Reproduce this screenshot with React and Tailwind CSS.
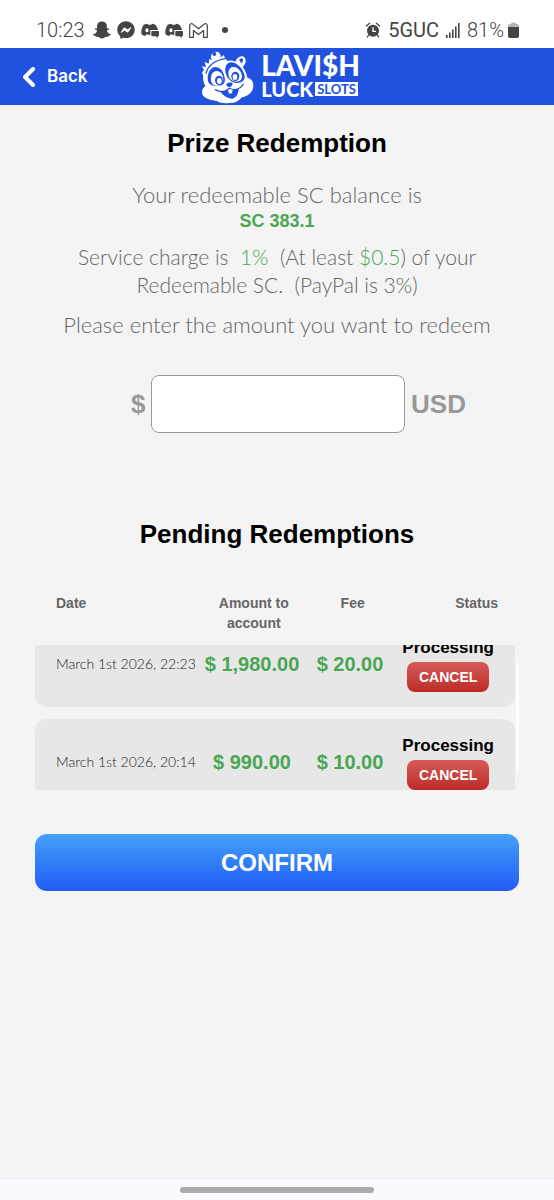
import { useLayoutEffect, useRef, useState } from 'react'
import { FaSnapchatGhost, FaFacebookMessenger } from 'react-icons/fa'

const redemptions = [
  { date: 'March 1st 2026, 22:23', amount: '$ 1,980.00', fee: '$ 20.00', status: 'Processing' },
  { date: 'March 1st 2026, 20:14', amount: '$ 990.00', fee: '$ 10.00', status: 'Processing' },
]

function DiscordChatIcon() {
  return (
    <svg viewBox="0 0 54 48" className="h-4 w-[18px]" fill="#444" aria-hidden="true">
      <path
        fillRule="evenodd"
        d="M17 5c-5 1-9 3-9 3C3 15 0 25 1 36c4 4 8 6 12 6l3-5c4 1 8 2 12 2V24h23C50 17 46 12 43 8c-4-2-7-3-10-3l-2 3h-9zM18 19c3 0 5 3 5 6s-2 6-5 6-5-3-5-6 2-6 5-6z"
      />
      <path d="M34 27h17c2 0 3 1 3 3v10c0 2-1 3-3 3h-1v5l-6-5H34c-2 0-3-1-3-3V30c0-2 1-3 3-3z" />
    </svg>
  )
}

function GmailIcon() {
  return (
    <svg viewBox="0 0 56 44" className="h-[15px] w-[19px]" fill="none" stroke="#444" strokeWidth="3.5" strokeLinejoin="round" aria-hidden="true">
      <path d="M2 8c0-6 6-8 10-4l16 13L44 4c4-4 10-2 10 4v34H43V22L28 34 13 22v20H2z" />
    </svg>
  )
}

function AlarmIcon() {
  return (
    <svg viewBox="0 0 46 48" className="h-4 w-4" aria-hidden="true">
      <path d="M3 12 13 4M43 12 33 4" stroke="#444" strokeWidth="4" strokeLinecap="round" />
      <circle cx="23" cy="26" r="18" fill="#444" />
      <path d="m10 39-4 6m30-6 4 6" stroke="#444" strokeWidth="4" strokeLinecap="round" />
      <path d="M23 16v12h9" stroke="#fff" strokeWidth="4" fill="none" />
    </svg>
  )
}

function SignalIcon() {
  return (
    <svg viewBox="0 0 14 15" className="h-[15px] w-[14px]" fill="#444" aria-hidden="true">
      <rect x="0" y="12" width="1.6" height="3" />
      <rect x="3" y="9.5" width="1.6" height="5.5" />
      <rect x="6" y="6.5" width="1.6" height="8.5" />
      <rect x="9" y="3.5" width="1.6" height="11.5" />
      <rect x="12" y="0" width="1.6" height="15" />
    </svg>
  )
}

function BatteryIcon() {
  return (
    <svg viewBox="0 0 11 16" className="h-4 w-[11px]" aria-hidden="true">
      <path d="M3 2a1.500 1.500 0 0 1 1.500-1.500h2A1.500 1.500 0 0 1 8 2h1a2 2 0 0 1 2 2v1H0V4a2 2 0 0 1 2-2z" fill="#b5b5b5" />
      <path d="M0 5h11v9a2 2 0 0 1-2 2H2a2 2 0 0 1-2-2z" fill="#444" />
    </svg>
  )
}

function Mascot() {
  return (
    <svg viewBox="0 0 174 168" className="h-14 w-[58px]" aria-hidden="true">
      <path
        fill="#fff"
        d="M10 82 6 70l6-6-6-12 12 2-4-16 12 6 2-14 8 4c-8-12 0-26 12-26 10 0 16 8 14 18l8-8 12 18c8-2 16-2 24 2 4-10 12-18 22-16 12 4 12 22 0 32 8 10 12 22 14 32 10 2 20 12 18 26-2 20-18 30-36 34-8 10-20 16-34 16-18 2-30 0-40-6-22-2-44-10-44-26 0-8 4-14 10-18-6-10-8-24-6-36z"
      />
      <circle cx="43" cy="15" r="6" fill="#2152df" />
      <path d="M18 74C22 52 44 32 80 28" stroke="#2152df" strokeWidth="4" fill="none" />
      <path d="M118 34c2-7 9-8 11-3 1 5-2 9-5 12z" fill="#2152df" />
      <path
        fill="#2152df"
        d="M24 96c-4-20 6-42 22-42 14 0 26 14 28 32 2 10 0 18-8 22-14 6-38 4-42-12zM78 76c-6-18 0-34 14-36 18-2 40 22 42 42 2 12-8 20-24 20-14 0-28-12-32-26z"
      />
      <path
        fill="#fff"
        d="M34 98c-4-16 2-32 16-32 12 0 20 12 20 26-2 12-10 18-20 18-8 0-14-4-16-12zM88 86c-6-14-2-30 10-32 14-2 28 14 28 28 0 12-8 16-18 16-10-2-16-6-20-12z"
      />
      <ellipse cx="57" cy="94" rx="12" ry="14" fill="#2152df" />
      <ellipse cx="106" cy="82" rx="12" ry="14" fill="#2152df" />
      <ellipse cx="58" cy="96" rx="7" ry="9" fill="#fff" />
      <ellipse cx="105" cy="84" rx="7" ry="9" fill="#fff" />
      <path fill="#2152df" d="M79 106c2-5 14-7 18-4 2 6-4 12-9 12s-10-3-9-8z" />
      <path d="M46 122c14 8 30 8 42-4 16 8 32 2 42-12" stroke="#2152df" strokeWidth="4" fill="none" strokeLinecap="round" />
      <path fill="#2152df" d="M60 127c12 2 22-2 28-8 8 4 18 4 28-2 0 18-8 32-22 32-14-2-26-10-34-22z" />
      <path fill="#fff" d="m84 122 6-2 8 2-2 11-9 1z" />
    </svg>
  )
}

function StatusBar() {
  return (
    <div className="flex h-12 items-end justify-between bg-white pr-[35px] pb-1 pl-9 font-['Roboto',sans-serif] text-xl text-[#444]">
      <div className="flex items-center gap-1.5">
        <span className="pr-0.5 font-light">10:23</span>
        <FaSnapchatGhost className="size-[18px]" aria-hidden="true" />
        <FaFacebookMessenger className="size-[18px]" aria-hidden="true" />
        <DiscordChatIcon />
        <DiscordChatIcon />
        <GmailIcon />
        <span className="ml-2 size-1.5 rounded-full bg-[#444]" />
      </div>
      <div className="flex items-center gap-[7px]">
        <AlarmIcon />
        <span>5GUC</span>
        <SignalIcon />
        <span className="flex items-center gap-1">
          <span className="font-light">81%</span>
          <BatteryIcon />
        </span>
      </div>
    </div>
  )
}

function Header() {
  return (
    <header className="grid h-[57px] grid-cols-[1fr_auto_1fr] items-center bg-[#2152df] text-white">
      <button type="button" className="flex items-center gap-3 justify-self-start pl-[23px] font-['Inter',sans-serif] text-[17px] font-semibold">
        <svg viewBox="0 0 12 20" className="h-5 w-3" fill="none" stroke="currentColor" strokeWidth="4" strokeLinecap="round" strokeLinejoin="round" aria-hidden="true">
          <path d="M10 2 2 10l8 8" />
        </svg>
        Back
      </button>
      <div className="flex items-center gap-[3px] pl-1.5 font-['Lato',sans-serif] font-black">
        <Mascot />
        <div>
          <div className="text-[28px] leading-6">LAVI$H</div>
          <div className="flex items-center gap-0.5">
            <span className="text-xl leading-6">LUCK</span>
            <span className="bg-white px-0.5 text-[13px] leading-[14px] font-bold text-[#2152df]">SLOTS</span>
          </div>
        </div>
      </div>
    </header>
  )
}

function PendingTable() {
  const bodyRef = useRef(null)
  const [scroll, setScroll] = useState({ top: 24, view: 145, full: 196 })

  const measure = () => {
    const el = bodyRef.current
    setScroll({ top: el.scrollTop, view: el.clientHeight, full: el.scrollHeight })
  }

  useLayoutEffect(() => {
    bodyRef.current.scrollTop = 24
    measure()
  }, [])

  return (
    <div className="relative">
      <table className="block">
        <thead className="block">
          <tr className="grid grid-cols-[146fr_100fr_96fr_96fr] pr-[21px] pb-3 pl-[21px] text-sm leading-5 text-[#666]">
            <th className="text-left">Date</th>
            <th className="px-3">Amount to account</th>
            <th>Fee</th>
            <th className="text-right">Status</th>
          </tr>
        </thead>
        <tbody ref={bodyRef} onScroll={measure} className="flex h-[145px] flex-col gap-3 overflow-y-auto pr-1 pb-3 [scrollbar-width:none]">
          {redemptions.map((r) => (
            <tr key={r.date} className="grid h-[86px] shrink-0 grid-cols-[146fr_100fr_96fr_96fr] items-center rounded-xl bg-[#e7e7e7] px-[21px] whitespace-nowrap">
              <td className="font-['Lato',sans-serif] text-sm font-light text-[#222]">{r.date}</td>
              <td className="text-center text-xl font-bold text-[#4aa653]">{r.amount}</td>
              <td className="text-center text-xl font-bold text-[#4aa653]">{r.fee}</td>
              <td className="flex flex-col items-end">
                <div className="flex flex-col items-center gap-0.5">
                  <span className="text-[17px] leading-6 font-bold text-black">{r.status}</span>
                  <button type="button" className="h-[30px] rounded-lg bg-linear-to-b from-[#d65a57] to-[#bb2b27] px-3 text-sm font-bold text-white">
                    CANCEL
                  </button>
                </div>
              </td>
            </tr>
          ))}
        </tbody>
      </table>
      <div className="pointer-events-none absolute right-0 bottom-0 h-[145px] w-[3px]">
        <div
          className="rounded-full bg-white"
          style={{
            height: (scroll.view * scroll.view) / scroll.full,
            transform: `translateY(${(scroll.top * scroll.view) / scroll.full}px)`,
          }}
        />
      </div>
    </div>
  )
}

export default function App() {
  return (
    <div className="flex min-h-screen flex-col bg-[#f4f4f4] font-['Liberation_Sans',Arial,sans-serif]">
      <StatusBar />
      <Header />
      <main className="flex-1 px-[35px] pt-5">
        <h1 className="text-center text-[26px] leading-9 font-bold text-black">Prize Redemption</h1>
        <div className="mt-5 text-center font-['Lato',sans-serif] text-[22px] leading-7 font-light text-[#666]">
          <p>Your redeemable SC balance is</p>
          <p className="font-['Liberation_Sans',Arial,sans-serif] text-lg leading-6 font-bold text-[#4aa653]">SC 383.1</p>
          <p className="mt-2.5 text-[21px]">
            Service charge is &nbsp;<span className="text-[#4aa653]">1%</span>&nbsp; (At least <span className="text-[#4aa653]">$0.5</span>) of your
            <br />
            Redeemable SC. &nbsp;(PayPal is 3%)
          </p>
          <p className="mt-3">
            <label htmlFor="amount">Please enter the amount you want to redeem</label>
          </p>
        </div>
        <div className="mt-9 flex items-center gap-1.5 pr-[17px] pl-24 text-[26px] font-bold text-[#999]">
          <span>$</span>
          <input id="amount" type="text" inputMode="decimal" className="h-[58px] min-w-0 flex-1 rounded-lg border border-[#999] bg-white px-4 font-normal text-black" />
          <span className="pr-9">USD</span>
        </div>
        <h2 className="mt-[83px] mb-[41px] text-center text-[26px] leading-9 font-bold text-black">Pending Redemptions</h2>
        <PendingTable />
        <button type="button" className="mt-11 h-[57px] w-full rounded-xl bg-linear-to-b from-[#479ff8] to-[#255af6] text-2xl font-bold text-white">
          CONFIRM
        </button>
      </main>
      <footer className="flex h-[22px] items-center justify-center border-t border-[#e8e8e8] bg-[#f9f9fe]">
        <div className="h-1.5 w-[35%] rounded-full bg-[#aaa]" />
      </footer>
    </div>
  )
}
